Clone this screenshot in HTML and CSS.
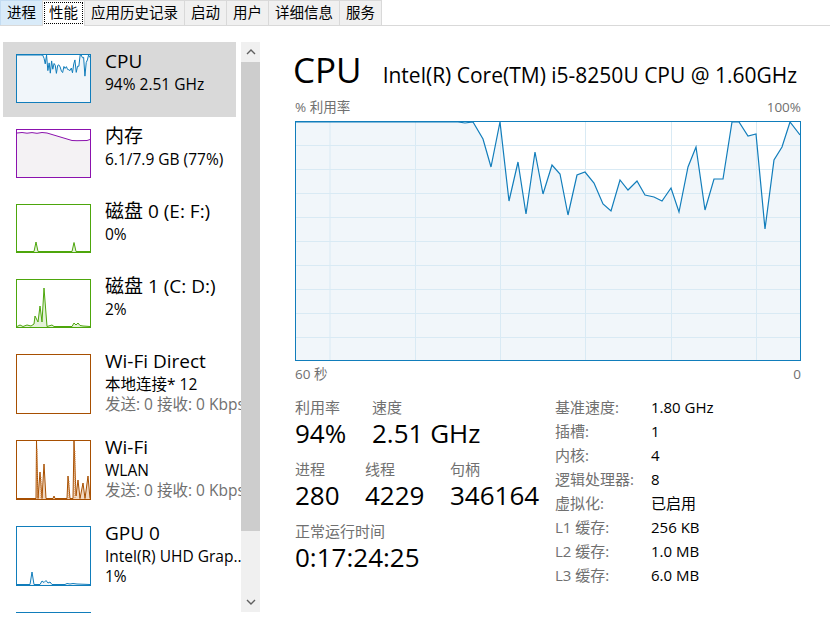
FILE: index.html
```html
<!DOCTYPE html>
<html lang="zh-CN">

<head>
    <meta charset="UTF-8">
    <meta name="viewport" content="width=device-width, initial-scale=1.0">
    <title>任务管理器 - 性能</title>
    <link rel="stylesheet" href="styles.css">
</head>

<body>
    <div class="tabs">
        <a href="javascript:;" class="tab hot">进程</a>
        <a href="javascript:;" class="tab now"><span>性能</span></a>
        <a href="javascript:;" class="tab">应用历史记录</a>
        <a href="javascript:;" class="tab">启动</a>
        <a href="javascript:;" class="tab">用户</a>
        <a href="javascript:;" class="tab">详细信息</a>
        <a href="javascript:;" class="tab">服务</a>
    </div>

    <div class="main">
        <div class="side">
            <ul class="list">
                <li class="item now">
                    <svg class="thumb cpu" viewBox="0 0 504 238" preserveAspectRatio="none">
                        <path class="area" d="M0,0 L162,0 L169,1 L177,0 L187,17 L195,45 L204,0 L213,79 L222,40 L230,92 L239,30 L247,72 L256,43 L264,52 L272,93 L281,53 L289,50 L298,61 L307,82 L315,89 L324,58 L332,68 L341,59 L349,73 L358,75 L366,79 L375,66 L383,90 L392,45 L400,25 L409,88 L418,57 L427,57 L436,0 L443,0 L452,14 L460,12 L469,107 L478,38 L486,25 L494,0 L504,13 L504,238 L0,238 Z" />
                        <path class="line" d="M0,0 L162,0 L169,1 L177,0 L187,17 L195,45 L204,0 L213,79 L222,40 L230,92 L239,30 L247,72 L256,43 L264,52 L272,93 L281,53 L289,50 L298,61 L307,82 L315,89 L324,58 L332,68 L341,59 L349,73 L358,75 L366,79 L375,66 L383,90 L392,45 L400,25 L409,88 L418,57 L427,57 L436,0 L443,0 L452,14 L460,12 L469,107 L478,38 L486,25 L494,0 L504,13" />
                    </svg>
                    <div class="info">
                        <p class="name">CPU</p>
                        <p class="sub">94% 2.51 GHz</p>
                    </div>
                </li>
                <li class="item">
                    <svg class="thumb mem" viewBox="0 0 73 47">
                        <path class="area" d="M0,3 L5,2.5 L10,3.2 L15,2.6 L20,3.3 L25,2.5 L30,3 L35,4.5 L40,6 L45,7.5 L50,9 L55,10.5 L60,10.7 L65,10.6 L70,10.5 L73,9.5 L73,47 L0,47 Z" />
                        <path class="line" d="M0,3 L5,2.5 L10,3.2 L15,2.6 L20,3.3 L25,2.5 L30,3 L35,4.5 L40,6 L45,7.5 L50,9 L55,10.5 L60,10.7 L65,10.6 L70,10.5 L73,9.5" />
                    </svg>
                    <div class="info">
                        <p class="name">内存</p>
                        <p class="sub">6.1/7.9 GB (77%)</p>
                    </div>
                </li>
                <li class="item">
                    <svg class="thumb disk" viewBox="0 0 73 47">
                        <path class="area" d="M0,46.5 L17,46.5 L19,37 L21,46.5 L55,46.5 L57,37.5 L59,46.5 L73,46.5 L73,47 L0,47 Z" />
                        <path class="line" d="M0,46.5 L17,46.5 L19,37 L21,46.5 L55,46.5 L57,37.5 L59,46.5 L73,46.5" />
                    </svg>
                    <div class="info">
                        <p class="name">磁盘 0 (E: F:)</p>
                        <p class="sub">0%</p>
                    </div>
                </li>
                <li class="item">
                    <svg class="thumb disk" viewBox="0 0 73 47">
                        <path class="area" d="M0,46.5 L3,45 L6,46.5 L10,45 L14,46 L17,44 L18,36 L21,42 L23,26 L25,42 L27,8 L30,46.5 L35,45 L37,46.5 L55,46.5 L57,43 L59,45 L61,43 L63,45.5 L66,46 L73,46.5 L73,47 L0,47 Z" />
                        <path class="line" d="M0,46.5 L3,45 L6,46.5 L10,45 L14,46 L17,44 L18,36 L21,42 L23,26 L25,42 L27,8 L30,46.5 L35,45 L37,46.5 L55,46.5 L57,43 L59,45 L61,43 L63,45.5 L66,46 L73,46.5" />
                    </svg>
                    <div class="info">
                        <p class="name">磁盘 1 (C: D:)</p>
                        <p class="sub">2%</p>
                    </div>
                </li>
                <li class="item">
                    <svg class="thumb net tall" viewBox="0 0 73 58"></svg>
                    <div class="info">
                        <p class="name">Wi-Fi Direct</p>
                        <p class="sub">本地连接* 12</p>
                        <p class="rate">发送: 0 接收: 0 Kbps</p>
                    </div>
                </li>
                <li class="item">
                    <svg class="thumb net tall" viewBox="0 0 73 58">
                        <path class="area" d="M0,57.5 L19,57.5 L19.5,0 L21,57.5 L23,31 L25,57.5 L27,23 L29,57.5 L36,57.5 L37,55 L38,57.5 L50,57.5 L51,35 L53,57.5 L56,57.5 L57,0 L59,55 L61,39 L63,57.5 L66,42 L68,57.5 L71,35 L73,57.5 L73,58 L0,58 Z" />
                        <path class="line" d="M0,57.5 L19,57.5 L19.5,0 L21,57.5 L23,31 L25,57.5 L27,23 L29,57.5 L36,57.5 L37,55 L38,57.5 L50,57.5 L51,35 L53,57.5 L56,57.5 L57,0 L59,55 L61,39 L63,57.5 L66,42 L68,57.5 L71,35 L73,57.5" />
                        <path class="dots" d="M20,57 L20,8 M24,57 L24,36 M52,57 L52,40 M58,57 L58,10" />
                    </svg>
                    <div class="info">
                        <p class="name">Wi-Fi</p>
                        <p class="sub">WLAN</p>
                        <p class="rate">发送: 0 接收: 0 Kbps</p>
                    </div>
                </li>
                <li class="item">
                    <svg class="thumb gpu tall" viewBox="0 0 73 58">
                        <path class="area" d="M0,57.5 L13,57.5 L15,45 L17,57.5 L23,57.5 L25,54 L27,55.5 L29,53.5 L31,56 L33,55 L35,57.5 L48,57.5 L50,56.5 L53,57 L56,56.5 L60,57 L73,57.5 L73,58 L0,58 Z" />
                        <path class="line" d="M0,57.5 L13,57.5 L15,45 L17,57.5 L23,57.5 L25,54 L27,55.5 L29,53.5 L31,56 L33,55 L35,57.5 L48,57.5 L50,56.5 L53,57 L56,56.5 L60,57 L73,57.5" />
                    </svg>
                    <div class="info">
                        <p class="name">GPU 0</p>
                        <p class="sub">Intel(R) UHD Grap..</p>
                        <p class="sub">1%</p>
                    </div>
                </li>
                <li class="item">
                    <svg class="thumb gpu tall" viewBox="0 0 73 58"></svg>
                    <div class="info">
                        <p class="name">GPU 1</p>
                    </div>
                </li>
            </ul>

            <div class="scroll">
                <div class="arrow">
                    <svg width="10" height="6" viewBox="0 0 10 6"><path d="M1,5 L5,1 L9,5" /></svg>
                </div>
                <div class="bar"></div>
                <div class="track"></div>
                <div class="arrow">
                    <svg width="10" height="6" viewBox="0 0 10 6"><path d="M1,1 L5,5 L9,1" /></svg>
                </div>
            </div>
        </div>

        <div class="detail">
            <div class="head">
                <h1>CPU</h1>
                <h2>Intel(R) Core(TM) i5-8250U CPU @ 1.60GHz</h2>
            </div>

            <div class="axis">
                <span>% 利用率</span>
                <span>100%</span>
            </div>
            <div class="graph">
                <svg width="504" height="238" viewBox="0 0 504 238">
                    <path class="area" d="M0,0 L162,0 L169,1 L177,0 L187,17 L195,45 L204,0 L213,79 L222,40 L230,92 L239,30 L247,72 L256,43 L264,52 L272,93 L281,53 L289,50 L298,61 L307,82 L315,89 L324,58 L332,68 L341,59 L349,73 L358,75 L366,79 L375,66 L383,90 L392,45 L400,25 L409,88 L418,57 L427,57 L436,0 L443,0 L452,14 L460,12 L469,107 L478,38 L486,25 L494,0 L504,13 L504,238 L0,238 Z" />
                    <path class="grid" d="M34,0 V238 M119.5,0 V238 M204.5,0 V238 M289.5,0 V238 M375.5,0 V238 M460.5,0 V238 M0,23.5 H504 M0,47.5 H504 M0,71.5 H504 M0,95.5 H504 M0,119.5 H504 M0,143.5 H504 M0,167.5 H504 M0,191.5 H504 M0,215.5 H504" />
                    <path class="line" d="M0,0 L162,0 L169,1 L177,0 L187,17 L195,45 L204,0 L213,79 L222,40 L230,92 L239,30 L247,72 L256,43 L264,52 L272,93 L281,53 L289,50 L298,61 L307,82 L315,89 L324,58 L332,68 L341,59 L349,73 L358,75 L366,79 L375,66 L383,90 L392,45 L400,25 L409,88 L418,57 L427,57 L436,0 L443,0 L452,14 L460,12 L469,107 L478,38 L486,25 L494,0 L504,13" />
                </svg>
            </div>
            <div class="axis time">
                <span>60 秒</span>
                <span>0</span>
            </div>

            <div class="stats">
                <div class="nums">
                    <div class="row">
                        <div class="stat util"><p class="label">利用率</p><p class="value">94%</p></div>
                        <div class="stat"><p class="label">速度</p><p class="value">2.51 GHz</p></div>
                    </div>
                    <div class="row">
                        <div class="stat proc"><p class="label">进程</p><p class="value">280</p></div>
                        <div class="stat thread"><p class="label">线程</p><p class="value">4229</p></div>
                        <div class="stat"><p class="label">句柄</p><p class="value">346164</p></div>
                    </div>
                    <div class="row">
                        <div class="stat"><p class="label">正常运行时间</p><p class="value">0:17:24:25</p></div>
                    </div>
                </div>

                <dl class="specs">
                    <dt>基准速度:</dt><dd>1.80 GHz</dd>
                    <dt>插槽:</dt><dd>1</dd>
                    <dt>内核:</dt><dd>4</dd>
                    <dt>逻辑处理器:</dt><dd>8</dd>
                    <dt>虚拟化:</dt><dd>已启用</dd>
                    <dt>L1 缓存:</dt><dd>256 KB</dd>
                    <dt>L2 缓存:</dt><dd>1.0 MB</dd>
                    <dt>L3 缓存:</dt><dd>6.0 MB</dd>
                </dl>
            </div>
        </div>
    </div>
</body>

</html>
```

FILE: styles.css
```css
* {
    margin: 0;
    padding: 0;
    box-sizing: border-box;
}

body {
    width: 830px;
    height: 623px;
    overflow: hidden;
    background-color: #fff;
    color: #000;
    font-family: "Open Sans", "Noto Sans CJK SC", sans-serif;
}

ul {
    list-style: none;
}

a {
    text-decoration: none;
    color: #000;
}

/* 顶部选项卡 */
.tabs {
    display: flex;
    height: 26px;
    border-bottom: 1px solid #d9d9d9;
    font-size: 14.5px;
}

.tab {
    display: block;
    height: 25px;
    padding: 0 6px;
    margin-right: -1px;
    line-height: 23px;
    background-color: #f0f0f0;
    border: 1px solid #d9d9d9;
    border-bottom: 0;
}

.tab.hot {
    background-color: #d9ebf9;
    border-color: #c3dcf2;
}

.tab.now {
    height: 26px;
    padding: 1px;
    background-color: #fff;
    position: relative;
}

.tab.now span {
    display: block;
    height: 22px;
    padding: 0 4px;
    line-height: 20px;
    border: 1px dotted #000;
}

.main {
    display: flex;
    padding-top: 16px;
}

/* 左侧列表 */
.side {
    display: flex;
    width: 262px;
}

.list {
    margin-left: 3px;
    width: 238px;
    height: 571px;
    overflow: hidden;
}

.item {
    display: flex;
    width: 233px;
    padding: 12px 0 14px 13px;
}

.item.now {
    background-color: #d9d9d9;
}

.thumb {
    flex: none;
    display: block;
    width: 75px;
    height: 49px;
    border: 1px solid;
}

.thumb.tall {
    height: 60px;
}

.thumb path {
    vector-effect: non-scaling-stroke;
    stroke-width: 1;
}

.thumb .line {
    fill: none;
}

.thumb .area {
    stroke: none;
}

.cpu,
.gpu {
    border-color: #117dbb;
    background-color: #fff;
}

.cpu .line,
.gpu .line {
    stroke: #117dbb;
}

.cpu .area,
.gpu .area {
    fill: #f1f6fa;
}

.mem {
    border-color: #8b12ae;
}

.mem .line {
    stroke: #8b12ae;
}

.mem .area {
    fill: #f4f2f4;
}

.disk {
    border-color: #4da60c;
}

.disk .line {
    stroke: #4da60c;
}

.disk .area {
    fill: #e4f1da;
}

.net {
    border-color: #a74f01;
}

.net .line {
    stroke: #a74f01;
}

.net .area {
    fill: #f1d9c2;
}

.net .dots {
    fill: none;
    stroke: #d58a4a;
    stroke-dasharray: 1 1;
}

.info {
    flex: none;
    width: 136px;
    margin: -6px 0 0 14px;
    white-space: nowrap;
    overflow: hidden;
}

.name {
    font-size: 19px;
    line-height: 26px;
}

.sub,
.rate {
    font-size: 15.5px;
    line-height: 20px;
}

.rate {
    color: #707070;
}

/* 滚动条 */
.scroll {
    display: flex;
    flex-direction: column;
    width: 19px;
    height: 570px;
    background-color: #f0f0f0;
}

.arrow {
    display: flex;
    align-items: center;
    justify-content: center;
    height: 20px;
}

.arrow path {
    fill: none;
    stroke: #606060;
    stroke-width: 1.4;
}

.bar {
    height: 469px;
    background-color: #cdcdcd;
}

.track {
    flex: 1;
}

/* 右侧详情 */
.detail {
    width: 506px;
    margin-left: 33px;
}

.head {
    display: flex;
    align-items: baseline;
    height: 48px;
    margin-top: 4px;
    line-height: 48px;
}

.head h1 {
    margin-left: -2px;
    font-size: 35px;
    font-weight: normal;
}

.head h2 {
    margin-left: 21px;
    font-size: 21px;
    font-weight: normal;
}

.axis {
    display: flex;
    justify-content: space-between;
    height: 27px;
    line-height: 27px;
    font-size: 13.5px;
    color: #707070;
}

.axis.time {
    height: 26px;
    line-height: 26px;
}

.graph {
    width: 506px;
    height: 240px;
    border: 1px solid #117dbb;
}

.graph svg {
    display: block;
}

.graph .area {
    fill: #f1f6fa;
}

.graph .grid {
    fill: none;
    stroke: #d9eaf4;
    stroke-width: 1;
}

.graph .line {
    fill: none;
    stroke: #117dbb;
    stroke-width: 1.2;
}

.stats {
    display: flex;
    margin-top: 8px;
}

.nums {
    width: 260px;
    padding-top: 2px;
}

.row {
    display: flex;
}

.row + .row {
    margin-top: 10px;
}

.stat.util {
    width: 77px;
}

.stat.proc {
    width: 70px;
}

.stat.thread {
    width: 85px;
}

.label {
    font-size: 15px;
    line-height: 20px;
    color: #707070;
}

.value {
    font-size: 26px;
    line-height: 32px;
}

.specs {
    display: grid;
    grid-template-columns: 96px auto;
    font-size: 15px;
    line-height: 24px;
}

.specs dt {
    color: #707070;
}
```
